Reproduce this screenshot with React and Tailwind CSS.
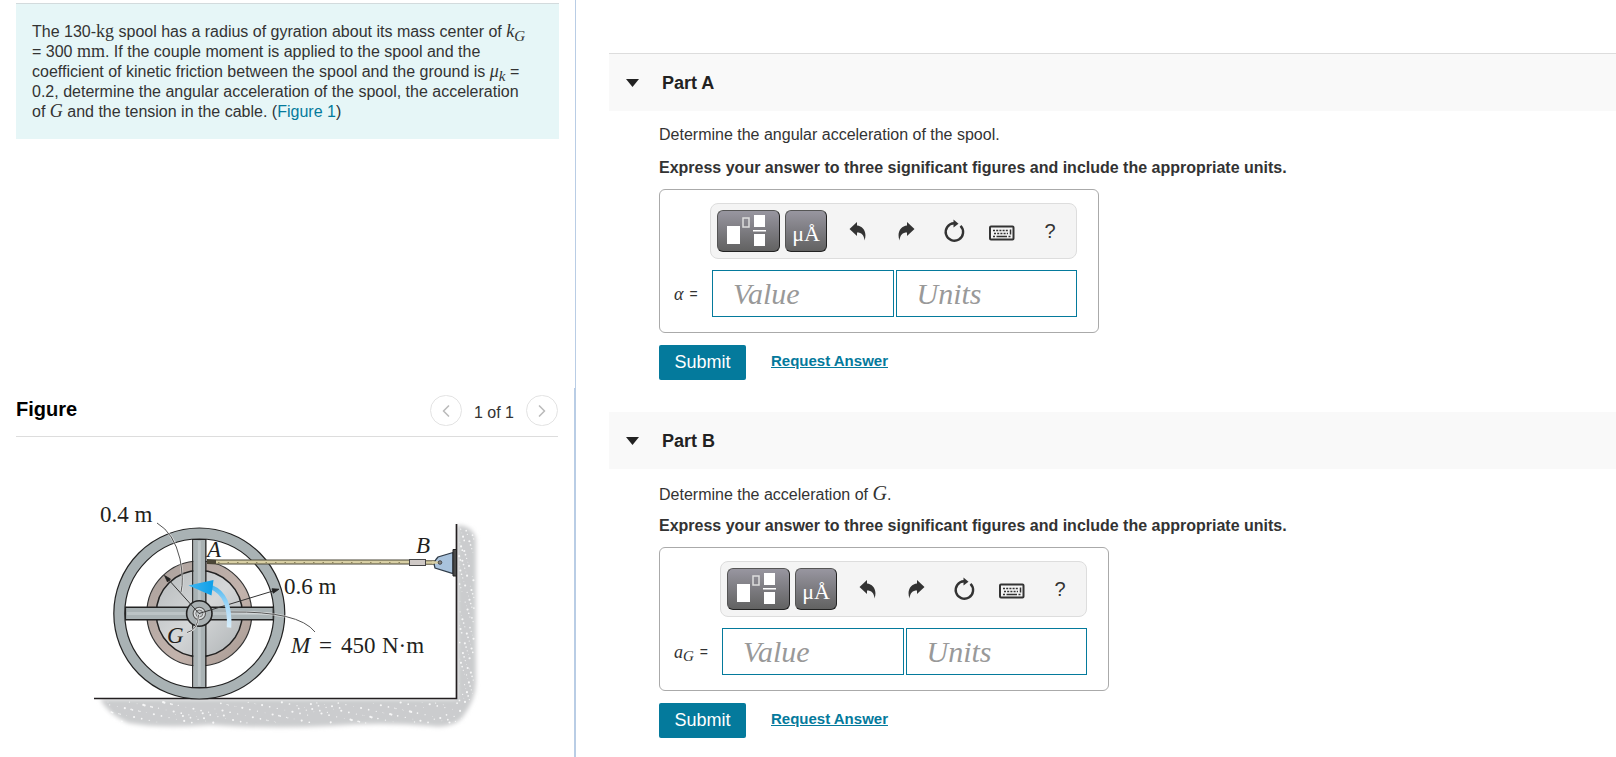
import { ChevronLeft, ChevronRight } from 'lucide-react';

// Fixed sequence so the concrete texture looks the same on every render
const specks = Array.from({ length: 260 }, (_, i) => ({
  x: (i * 61.803) % 100,
  y: (i * 37.719 + (i % 7) * 11.3) % 100,
  r: 0.4 + (i % 4) * 0.22,
}));

function Sub({ base, sub }) {
  return (
    <i className="font-['Liberation_Serif',serif] text-lg leading-none whitespace-nowrap">
      {base}
      <sub className="text-[15px] leading-none">{sub}</sub>
    </i>
  );
}

function SpoolFigure() {
  return (
    <svg viewBox="90 495 400 240" className="block w-[400px] max-w-full" role="img" aria-label="Spool with cable A B">
      <defs>
        <filter id="soft" x="-10%" y="-10%" width="120%" height="120%">
          <feGaussianBlur stdDeviation="2" />
        </filter>
        <linearGradient id="disc" x1="0" y1="0" x2="1" y2="1">
          <stop offset="0" stopColor="#b5b9bb" />
          <stop offset="0.5" stopColor="#d5d7d8" />
          <stop offset="1" stopColor="#aeb3b5" />
        </linearGradient>
        <linearGradient id="rim" x1="0" y1="0" x2="1" y2="1">
          <stop offset="0" stopColor="#a9a09c" />
          <stop offset="0.6" stopColor="#c3b3ac" />
          <stop offset="1" stopColor="#a3968f" />
        </linearGradient>
        <linearGradient id="curve" x1="0" y1="0" x2="0" y2="1">
          <stop offset="0" stopColor="#4fb9f0" />
          <stop offset="0.5" stopColor="#a9daf8" />
          <stop offset="1" stopColor="#d9effc" />
        </linearGradient>
        <linearGradient id="head" x1="0" y1="0" x2="1" y2="0">
          <stop offset="0" stopColor="#3fb5f0" />
          <stop offset="1" stopColor="#0d9fe8" />
        </linearGradient>
      </defs>

      {/* ground and wall */}
      <path d="M100 699H457V525Q474 526 476 540V682Q476 700 462 718Q452 729 430 726Q380 722 330 726Q270 729 210 725Q160 729 128 723Q108 714 100 699Z" fill="#cbccce" filter="url(#soft)" />
      <g fill="#fff" opacity="0.85">
        {specks.slice(0, 190).map((s, i) => (
          <circle key={i} cx={108 + s.x * 3.55} cy={702 + s.y * 0.21} r={s.r} />
        ))}
        {specks.slice(150).map((s, i) => (
          <circle key={i} cx={459 + s.y * 0.15} cy={529 + s.x * 1.75} r={s.r} />
        ))}
      </g>
      <path d="M94 498H456V698H94Z" fill="#fff" />
      <path d="M94 698.5H456.5V524" fill="none" stroke="#231f20" strokeWidth="1.7" />

      {/* wheel */}
      <circle cx="199.3" cy="613.5" r="52.5" fill="url(#rim)" stroke="#333" strokeWidth="1.2" />
      <circle cx="199.3" cy="613.5" r="43" fill="url(#disc)" stroke="#222" strokeWidth="1.5" />
      <circle cx="199.3" cy="613.5" r="80" fill="none" stroke="#222" strokeWidth="12.2" />
      <circle cx="199.3" cy="613.5" r="80" fill="none" stroke="#a9b2b4" strokeWidth="9.8" />
      <path d="M192.8 613.5V540M205.8 613.5V540M192.8 613.5V687M205.8 613.5V687M199 607.2H126M199 619.8H126M199 607.2H273M199 619.8H273" stroke="#222" strokeWidth="1.4" />
      <path d="M193.5 539H205.1V688H193.5ZM125 608H273.5V619H125Z" fill="#a9b2b4" />
      <path d="M192 539.5H206.5M192 687.5H206.5M125.500 606.5V620.5M273.2 606.5V620.5" stroke="#222" strokeWidth="1.2" />
      <path d="M199.3 541V686M127 613.5H272" stroke="#bcc4c6" strokeWidth="3" />
      <circle cx="199.3" cy="613.5" r="12.7" fill="#a9b0b2" stroke="#222" strokeWidth="1.6" />
      <circle cx="199.3" cy="613.5" r="6.2" fill="#d9dcdd" stroke="#555" strokeWidth="1.1" />
      <circle cx="199.3" cy="613.5" r="3.5" fill="#c3c7c9" stroke="#777" />

      {/* cable */}
      <path d="M207 561.5Q212 561.5 218 562H410" fill="none" stroke="#4b4636" strokeWidth="5" />
      <path d="M216 562H410" stroke="#d8cfa4" strokeWidth="3.2" />
      <path d="M218 562.5H408" stroke="#8f865f" strokeWidth="1.2" strokeDasharray="1.5 8" />
      <path d="M425 562.5H437" stroke="#5b543c" strokeWidth="4.5" />
      <path d="M425 562.5H439" stroke="#d8cfa4" strokeWidth="2.5" />
      <rect x="409.5" y="559.5" width="16" height="6" fill="#cfc9c6" stroke="#444" />
      <path d="M453 552.5L438 557Q432.5 562.5 435 568L453 573.5Z" fill="#a9c3dd" stroke="#2f3b48" strokeWidth="1.3" />
      <path d="M432 562.5H440" stroke="#d8cfa4" strokeWidth="2.5" />
      <circle cx="440" cy="562.5" r="1.8" fill="#888" stroke="#333" strokeWidth="0.8" />
      <path d="M453 549.5H456.5V576H453Z" fill="#4a4a4a" stroke="#222" />

      {/* leaders and dimension arrows */}
      <g fill="none" stroke="#fff" strokeWidth="2.5" opacity="0.5">
        <path d="M157 523Q174 533 180 559Q184 580 181 592M230 612Q299 611 315 632" />
      </g>
      <g fill="none" stroke="#555" strokeWidth="1">
        <path d="M157 523Q174 533 180 559Q184 580 181 592" />
        <path d="M230 612Q299 611 315 632" />
        <path d="M187 632.5Q198 630 198.5 615" stroke="#eee" strokeWidth="2" />
        <path d="M187 632.5Q198 630 198.5 615" />
        <path d="M199 613.5L168 579M199 613.5L273 591" stroke="#333" />
      </g>
      <path d="M164.5 575.5L170.5 579L167.5 582ZM279 589.2L272 588.7L273.2 593.2Z" fill="#222" stroke="#222" strokeWidth="0.8" />

      {/* couple moment */}
      <path d="M229 627.5Q231 595 211 587" fill="none" stroke="url(#curve)" strokeWidth="4.5" />
      <path d="M188.5 585.5L213.5 580L211.5 595.5Z" fill="url(#head)" />

      <g fill="#231f20" fontFamily="Liberation Serif, serif" fontSize="23">
        <text x="100" y="522">0.4 m</text>
        <text x="284" y="594">0.6 m</text>
        <g fontStyle="italic">
          <text x="207" y="557">A</text>
          <text x="416" y="553">B</text>
          <text x="167" y="643">G</text>
          <text x="291" y="653">M</text>
        </g>
        <text x="319" y="653">=</text>
        <text x="341" y="653">450</text>
        <text x="382" y="653">N·m</text>
      </g>
    </svg>
  );
}

function TemplateIcon() {
  return (
    <svg width="61" height="40" viewBox="0 0 61 40" aria-hidden="true">
      <rect x="9" y="15" width="13" height="18" fill="#fff" />
      <rect x="25" y="7" width="6" height="9" fill="none" stroke="#ddd" strokeWidth="1.5" />
      <rect x="36" y="4" width="11" height="12" fill="#fff" />
      <rect x="35" y="19" width="13" height="1.5" fill="#fff" />
      <rect x="36" y="23" width="11" height="12" fill="#fff" />
    </svg>
  );
}

function UndoIcon({ flip }) {
  return (
    <svg width="18" height="20" viewBox="0 0 18 20" className={flip ? '-scale-x-100' : ''} aria-hidden="true">
      <path d="M0.5 8L8 1V4.5C14 5 18.5 11 15.5 19.5C15 14 12.5 11.5 8 11.5V15Z" fill="#333" />
    </svg>
  );
}

function ResetIcon() {
  return (
    <svg width="22" height="24" viewBox="0 0 22 24" aria-hidden="true">
      <path d="M17.5 6.8A8.7 8.7 0 1 1 11 4.3" fill="none" stroke="#333" strokeWidth="2.4" />
      <path d="M10.500 0.5L15.5 4.8L10.500 8.5Z" fill="#333" />
    </svg>
  );
}

function KeyboardIcon() {
  return (
    <svg width="26" height="16" viewBox="0 0 26 16" aria-hidden="true">
      <rect x="1" y="1.5" width="23.5" height="13" rx="1" fill="none" stroke="#333" strokeWidth="2" />
      <path d="M4 5.5H20M5 8.5H19" stroke="#333" strokeWidth="1.6" strokeDasharray="2 1.2" />
      <path d="M21.5 4.5V9.5" stroke="#333" strokeWidth="1.5" />
      <path d="M4 11.5H6M7.5 11.5H18M19.5 11.5H21.5" stroke="#333" strokeWidth="1.6" />
    </svg>
  );
}

const darkButton =
  'flex h-[42px] items-center justify-center rounded-md border border-[#555] border-r-[#222] border-b-[#222] bg-linear-to-b from-[#9896a0] to-[#626262] text-white';
const toolButton = 'flex h-[42px] w-12 items-center justify-center text-[#333]';

function Toolbar() {
  return (
    <div className="flex h-14 items-center rounded-lg border border-[#ddd] bg-[#f4f4f4] pr-[2px] pl-[6px]">
      <button type="button" aria-label="Templates" className={`${darkButton} mr-[5px] w-[63px]`}>
        <TemplateIcon />
      </button>
      <button type="button" aria-label="Symbols" className={`${darkButton} mr-[7px] w-[42px] pt-1 font-['Liberation_Serif',serif] text-[22px]`}>
        μÅ
      </button>
      <button type="button" aria-label="Undo" className={toolButton}>
        <UndoIcon />
      </button>
      <button type="button" aria-label="Redo" className={toolButton}>
        <UndoIcon flip />
      </button>
      <button type="button" aria-label="Reset" className={toolButton}>
        <ResetIcon />
      </button>
      <button type="button" aria-label="Keyboard" className={`${toolButton} pt-1`}>
        <KeyboardIcon />
      </button>
      <button type="button" aria-label="Help" className={`${toolButton} text-xl`}>
        ?
      </button>
    </div>
  );
}

function Part({ id, title, question, symbol, labelWidth, headerStyle }) {
  const field =
    "h-[47px] min-w-0 flex-1 border border-[#047a9c] bg-white px-5 font-['Liberation_Serif',serif] text-3xl italic text-[#333] outline-none placeholder:text-[#999]";
  return (
    <section>
      <h2 className={`flex items-center bg-[#f9f9f9] pl-[17px] text-lg font-bold text-[#222] ${headerStyle}`}>
        <button type="button" className="flex items-center gap-[23px]">
          <svg width="13" height="8" viewBox="0 0 13 8" aria-hidden="true">
            <path d="M0 0H13L6.5 8Z" fill="#222" />
          </svg>
          {title}
        </button>
      </h2>
      <div className="pr-4 pl-[50px]">
        <p className="h-[34px] pt-[14px] leading-5">{question}</p>
        <p className="pt-[13px] leading-5 font-bold">Express your answer to three significant figures and include the appropriate units.</p>
        <div className="mt-[11px] flex w-fit max-w-full items-end rounded-md border border-[#aaa] pt-[13px] pr-[21px] pb-[15px] pl-[14px]">
          <label htmlFor={`${id}-value`} className={`flex h-[47px] items-center gap-[6px] text-sm whitespace-nowrap ${labelWidth}`}>
            {symbol} <span>=</span>
          </label>
          <div className="flex w-[367px] flex-col gap-[11px]">
            <Toolbar />
            <div className="flex gap-[2px] pl-[2px]">
              <input id={`${id}-value`} type="text" placeholder="Value" className={field} />
              <input type="text" aria-label="Units" placeholder="Units" className={field} />
            </div>
          </div>
        </div>
        <div className="mt-3 flex items-center gap-[25px]">
          <button type="button" className="h-[35px] w-[87px] rounded-xs bg-[#047a9c] pb-[2px] text-lg text-white">
            Submit
          </button>
          <a href="#" className="pb-[2px] text-[15px] font-bold text-[#047a9c] underline">
            Request Answer
          </a>
        </div>
      </div>
    </section>
  );
}

function Problem() {
  return (
    <div className="mt-[3px] mr-4 ml-4 min-h-[136px] border-t border-[#d3dbdd] bg-[#e6f6f7] px-4 pt-[18px] leading-5">
      The 130-<span className="font-['Liberation_Serif',serif] text-lg leading-none">kg</span> spool has a radius of gyration about its mass center of{' '}
      <Sub base="k" sub="G" />
      <br />= 300 <span className="font-['Liberation_Serif',serif] text-lg leading-none">mm</span>. If the couple moment is applied to the spool and the
      <br />
      coefficient of kinetic friction between the spool and the ground is <Sub base="μ" sub="k" /> =
      <br />
      0.2, determine the angular acceleration of the spool, the acceleration
      <br />
      of <i className="font-['Liberation_Serif',serif] text-lg leading-none">G</i> and the tension in the cable. (
      <a href="#figure" className="text-[#047a9c]">
        Figure 1
      </a>
      )
    </div>
  );
}

export default function App() {
  const pager = 'flex h-[31px] w-8 items-center justify-center rounded-full border border-[#e3e3e3] text-[#bbb]';
  return (
    <main className="flex min-h-screen bg-white font-['Liberation_Sans',Arial,sans-serif] text-base text-[#333]">
      <div className="flex w-[576px] shrink-0 flex-col">
        <div className="h-[388px] border-r border-[#b9cde5]">
          <Problem />
        </div>
        <section id="figure" className="flex-1 border-r-2 border-[#b9cde5] px-4">
          <div className="flex items-start justify-between border-b border-[#ddd] pt-[7px] pb-[10px]">
            <h2 className="text-xl font-bold text-black">Figure</h2>
            <div className="flex items-center gap-3">
              <button type="button" aria-label="Previous figure" className={pager}>
                <ChevronLeft size={20} />
              </button>
              <span className="pt-[5px]">1 of 1</span>
              <button type="button" aria-label="Next figure" className={pager}>
                <ChevronRight size={20} />
              </button>
            </div>
          </div>
          <div className="pt-[58px] pl-[74px]">
            <SpoolFigure />
          </div>
        </section>
      </div>
      <div className="flex min-w-0 flex-1 flex-col gap-8 pt-[53px] pl-[33px]">
        <Part
          id="part-a"
          title="Part A"
          headerStyle="h-[58px] border-t border-[#ddd]"
          labelWidth="w-9"
          question="Determine the angular acceleration of the spool."
          symbol={<i className="font-['Liberation_Serif',serif] text-lg">α</i>}
        />
        <Part
          id="part-b"
          title="Part B"
          headerStyle="h-[57px]"
          labelWidth="w-[46px]"
          question={
            <>
              Determine the acceleration of <i className="font-['Liberation_Serif',serif] text-xl leading-none">G</i>.
            </>
          }
          symbol={<Sub base="a" sub="G" />}
        />
      </div>
    </main>
  );
}
